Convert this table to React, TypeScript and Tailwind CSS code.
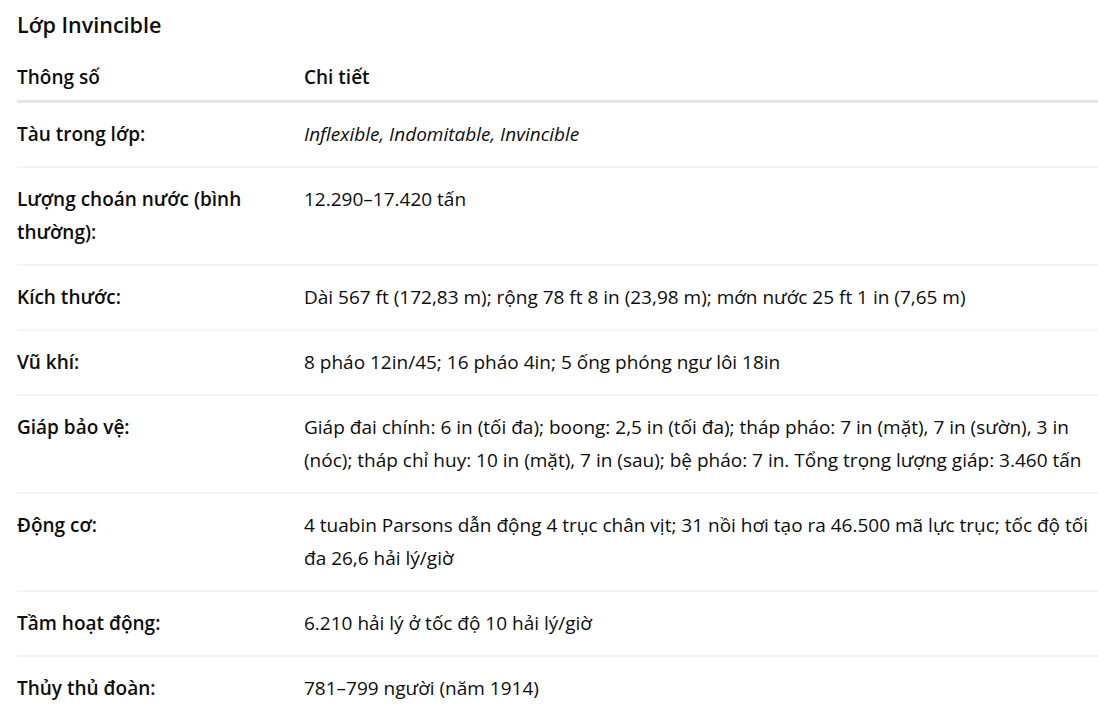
import React from 'react';

type Row = { label: string; value: React.ReactNode };

const rows: Row[] = [
  { label: 'Tàu trong lớp:', value: <em>Inflexible, Indomitable, Invincible</em> },
  { label: 'Lượng choán nước (bình thường):', value: '12.290–17.420 tấn' },
  { label: 'Kích thước:', value: 'Dài 567 ft (172,83 m); rộng 78 ft 8 in (23,98 m); mớn nước 25 ft 1 in (7,65 m)' },
  { label: 'Vũ khí:', value: '8 pháo 12in/45; 16 pháo 4in; 5 ống phóng ngư lôi 18in' },
  {
    label: 'Giáp bảo vệ:',
    value:
      'Giáp đai chính: 6 in (tối đa); boong: 2,5 in (tối đa); tháp pháo: 7 in (mặt), 7 in (sườn), 3 in (nóc); tháp chỉ huy: 10 in (mặt), 7 in (sau); bệ pháo: 7 in. Tổng trọng lượng giáp: 3.460 tấn',
  },
  {
    label: 'Động cơ:',
    value: '4 tuabin Parsons dẫn động 4 trục chân vịt; 31 nồi hơi tạo ra 46.500 mã lực trục; tốc độ tối đa 26,6 hải lý/giờ',
  },
  { label: 'Tầm hoạt động:', value: '6.210 hải lý ở tốc độ 10 hải lý/giờ' },
  { label: 'Thủy thủ đoàn:', value: '781–799 người (năm 1914)' },
];

export default function App() {
  return (
    <div
      className="min-h-screen bg-white pl-[17px] text-[#0d0d0d]"
      style={{ fontFamily: '"Open Sans", "Noto Sans", sans-serif' }}
    >
      {/* Section heading */}
      <h3 className="pt-[10px] text-[21.5px] font-semibold leading-[30px]">Lớp Invincible</h3>

      {/* Spec table */}
      <table className="mt-[8px] w-full border-collapse text-left text-[19px] leading-[33px]">
        <thead>
          <tr className="border-b-[3px] border-[#e6e6e6]">
            <th className="w-[287px] pb-[6px] pr-4 pt-[13px] align-top font-semibold">Thông số</th>
            <th className="pb-[6px] pt-[13px] align-top font-semibold">Chi tiết</th>
          </tr>
        </thead>
        <tbody>
          {rows.map((r, i) => (
            <tr key={r.label} className={i < rows.length - 1 ? 'border-b-2 border-[#f3f3f3]' : ''}>
              <td className="py-[15px] pr-8 align-top font-semibold">{r.label}</td>
              <td className="py-[15px] align-top">{r.value}</td>
            </tr>
          ))}
        </tbody>
      </table>
    </div>
  );
}
